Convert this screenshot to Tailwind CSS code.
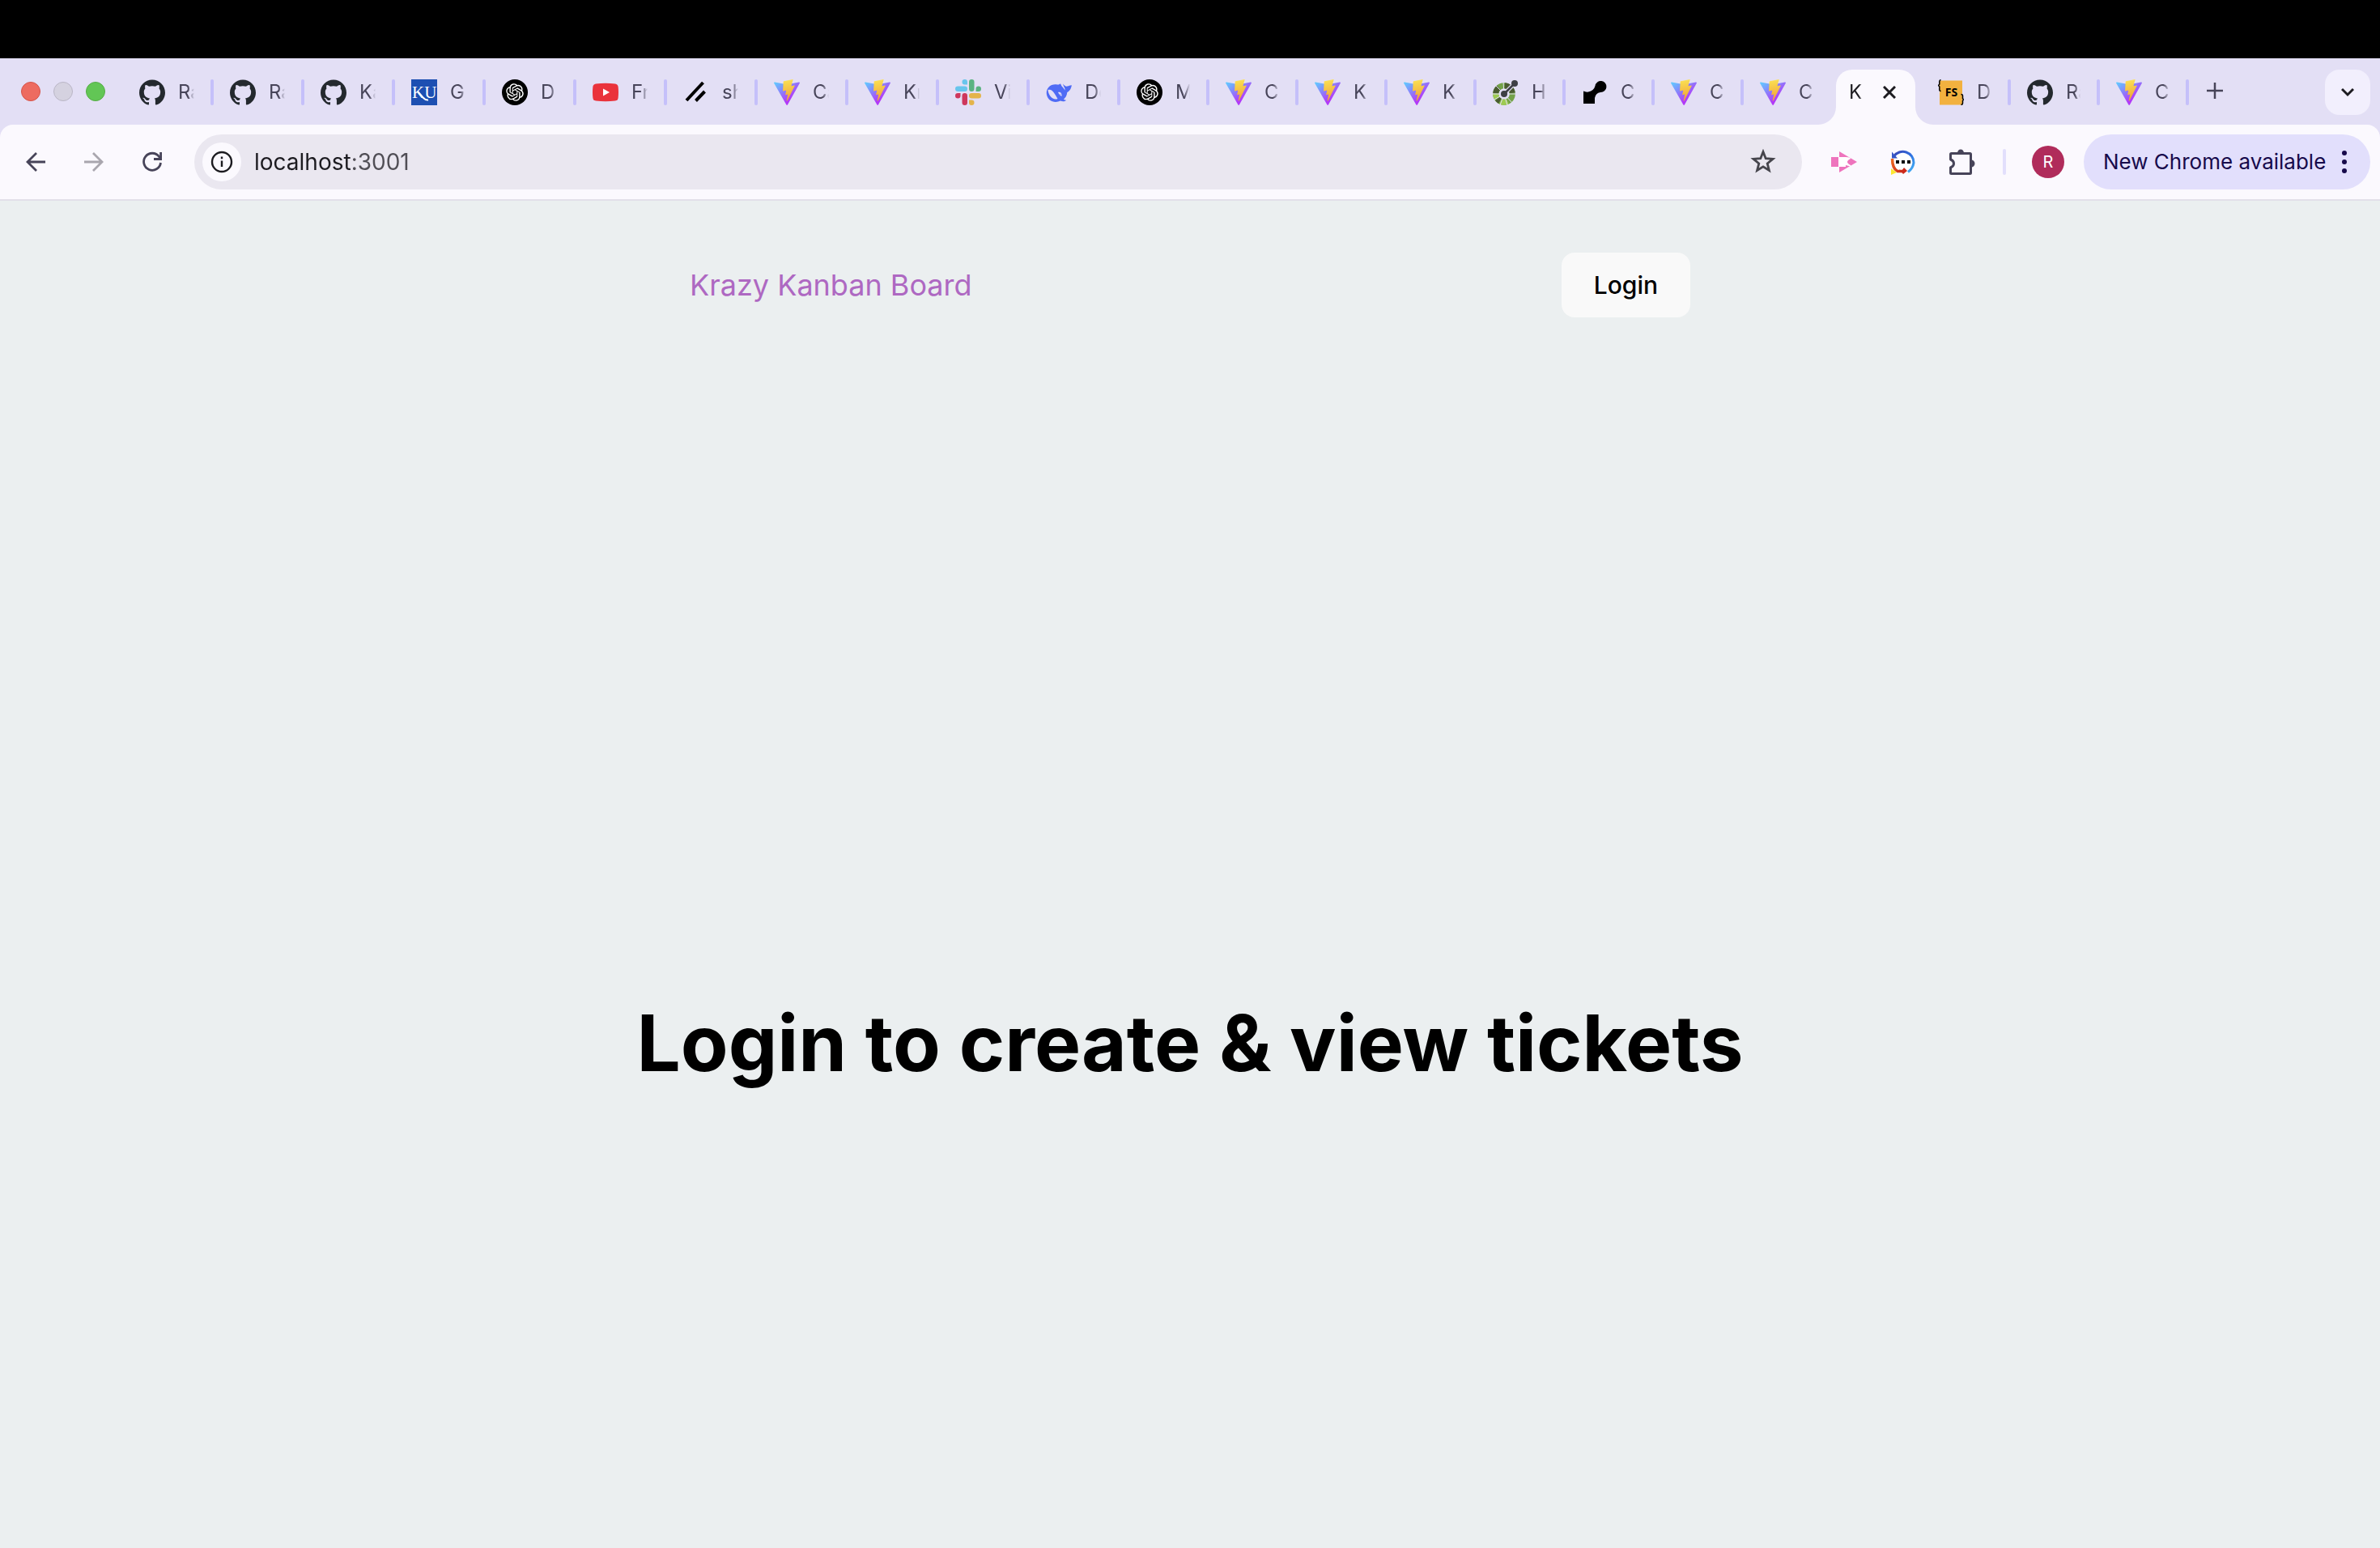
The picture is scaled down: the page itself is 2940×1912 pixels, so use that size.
<!DOCTYPE html>
<html lang="en">
<head>
<meta charset="utf-8">
<meta name="viewport" content="width=device-width, initial-scale=1">
<title>Krazy Kanban Board</title>
<script src="https://cdn.jsdelivr.net/npm/@tailwindcss/browser@4"></script>
</head>
<body class="flex min-h-screen flex-col overflow-x-hidden bg-[#ebeff0] font-['Inter','Liberation_Sans',sans-serif] text-black">

<!-- Shared icon definitions -->
<svg class="absolute size-0" aria-hidden="true">
  <defs>
    <linearGradient id="viteA" x1="-.828%" x2="57.636%" y1="7.652%" y2="78.411%"><stop offset="0%" stop-color="#62c8ff"/><stop offset="100%" stop-color="#b23af8"/></linearGradient>
    <linearGradient id="viteB" x1="43.376%" x2="50.316%" y1="2.242%" y2="89.03%"><stop offset="0%" stop-color="#fbe36a"/><stop offset="8.333%" stop-color="#f9db50"/><stop offset="100%" stop-color="#f2a63a"/></linearGradient>
    <linearGradient id="arcBlue" x1="0" x2="1" y1="0" y2="1"><stop offset="0" stop-color="#3a46b4"/><stop offset=".5" stop-color="#2f6fe0"/><stop offset="1" stop-color="#45b4f5"/></linearGradient>
    <linearGradient id="arcRed" x1="0" x2="1" y1="0" y2="1"><stop offset="0" stop-color="#ee6a1f"/><stop offset="1" stop-color="#cc2a1c"/></linearGradient>
  </defs>
  <symbol id="github" viewBox="0 0 24 24"><path fill="#24292e" d="M12 .297c-6.63 0-12 5.373-12 12 0 5.303 3.438 9.8 8.205 11.385.6.113.82-.258.82-.577 0-.285-.01-1.04-.015-2.04-3.338.724-4.042-1.61-4.042-1.61C4.422 18.07 3.633 17.7 3.633 17.7c-1.087-.744.084-.729.084-.729 1.205.084 1.838 1.236 1.838 1.236 1.07 1.835 2.809 1.305 3.495.998.108-.776.417-1.305.76-1.605-2.665-.3-5.466-1.332-5.466-5.93 0-1.31.465-2.38 1.235-3.22-.135-.303-.54-1.523.105-3.176 0 0 1.005-.322 3.3 1.23.96-.267 1.98-.399 3-.405 1.02.006 2.04.138 3 .405 2.28-1.552 3.285-1.23 3.285-1.23.645 1.653.24 2.873.12 3.176.765.84 1.23 1.91 1.23 3.22 0 4.61-2.805 5.625-5.475 5.92.42.36.81 1.096.81 2.22 0 1.606-.015 2.896-.015 3.286 0 .315.21.69.825.57C20.565 22.092 24 17.592 24 12.297c0-6.627-5.373-12-12-12"/></symbol>
  <symbol id="openai" viewBox="0 0 32 32"><circle cx="16" cy="16" r="16"/><g transform="translate(5.200 5.200) scale(.9)"><path fill="#fff" d="M22.2819 9.8211a5.9847 5.9847 0 0 0-.5157-4.9108 6.0462 6.0462 0 0 0-6.5098-2.9A6.0651 6.0651 0 0 0 4.9807 4.1818a5.9847 5.9847 0 0 0-3.9977 2.9 6.0462 6.0462 0 0 0 .7427 7.0966 5.98 5.98 0 0 0 .511 4.9107 6.051 6.051 0 0 0 6.5146 2.9001A5.9847 5.9847 0 0 0 13.2599 24a6.0557 6.0557 0 0 0 5.7718-4.2058 5.9894 5.9894 0 0 0 3.9977-2.9001 6.0557 6.0557 0 0 0-.7475-7.0729zm-9.022 12.6081a4.4755 4.4755 0 0 1-2.8764-1.0408l.1419-.0804 4.7783-2.7582a.7948.7948 0 0 0 .3927-.6813v-6.7369l2.02 1.1686a.071.071 0 0 1 .038.052v5.5826a4.504 4.504 0 0 1-4.4945 4.4944zm-9.6607-4.1254a4.4708 4.4708 0 0 1-.5346-3.0137l.142.0852 4.783 2.7582a.7712.7712 0 0 0 .7806 0l5.8428-3.3685v2.3324a.0804.0804 0 0 1-.0332.0615L9.74 19.9502a4.4992 4.4992 0 0 1-6.1408-1.6464zM2.3408 7.8956a4.485 4.485 0 0 1 2.3655-1.9728V11.6a.7664.7664 0 0 0 .3879.6765l5.8144 3.3543-2.0201 1.1685a.0757.0757 0 0 1-.071 0l-4.8303-2.7865A4.504 4.504 0 0 1 2.3408 7.872zm16.5963 3.8558L13.1038 8.364 15.1192 7.2a.0757.0757 0 0 1 .071 0l4.8303 2.7913a4.4944 4.4944 0 0 1-.6765 8.1042v-5.6772a.79.79 0 0 0-.407-.667zm2.0107-3.0231l-.142-.0852-4.7735-2.7818a.7759.7759 0 0 0-.7854 0L9.409 9.2297V6.8974a.0662.0662 0 0 1 .0284-.0615l4.8303-2.7866a4.4992 4.4992 0 0 1 6.6802 4.66zM8.3065 12.863l-2.02-1.1638a.0804.0804 0 0 1-.038-.0567V6.0742a4.4992 4.4992 0 0 1 7.3757-3.4537l-.142.0805L8.704 5.459a.7948.7948 0 0 0-.3927.6813zm1.0976-2.3654l2.602-1.4998 2.6069 1.4998v2.9994l-2.5974 1.4997-2.6067-1.4997Z"/></g></symbol>
  <symbol id="youtube" viewBox="0 0 32 32"><path fill="#ea333c" d="M4 5.500Q16 4 28 5.500 31.200 6 31.600 9 32.400 16 31.600 23 31.200 26 28 26.500 16 28 4 26.500.8 26 .4 23-.4 16 .4 9 .8 6 4 5.500Z"/><path fill="#fff" d="M13 11.500v9l8-4.500z"/></symbol>
  <symbol id="slashes" viewBox="0 0 32 32"><g fill="none" stroke="#000" stroke-width="4"><path d="M4 26 24.500 4M15.500 26.500 26.500 15"/></g></symbol>
  <symbol id="vite" viewBox="0 0 256 257"><path fill="url(#viteA)" d="M255.153 37.938L134.897 252.976c-2.483 4.44-8.862 4.466-11.382.048L.875 37.958c-2.746-4.814 1.371-10.646 6.827-9.67l120.385 21.517a6.537 6.537 0 0 0 2.322-.004l117.867-21.483c5.438-.991 9.574 4.796 6.877 9.62Z"/><path fill="url(#viteB)" d="M185.432.063L96.44 17.501a3.268 3.268 0 0 0-2.634 3.014l-5.474 92.456a3.268 3.268 0 0 0 3.997 3.378l24.777-5.718c2.318-.535 4.413 1.507 3.936 3.838l-7.361 36.047c-.495 2.426 1.782 4.5 4.151 3.78l15.304-4.649c2.372-.72 4.652 1.36 4.15 3.788l-11.698 56.621c-.732 3.542 3.979 5.473 5.943 2.437l1.313-2.028l72.516-144.72c1.215-2.423-.88-5.186-3.54-4.672l-25.505 4.922c-2.396.462-4.435-1.77-3.759-4.114l16.646-57.705c.677-2.35-1.37-4.583-3.769-4.113Z"/></symbol>
  <symbol id="slack" viewBox="0 0 32 32"><g fill="#68c5ec"><rect y="8.500" width="15" height="6.500" rx="3.250"/><path d="M15 6.500h-3.200A3.250 3.250 0 1 1 15 3.250z"/></g><g fill="#5bb381"><rect x="17" width="6.500" height="15" rx="3.250"/><path d="M25.500 15v-3.200A3.250 3.250 0 1 1 28.750 15z"/></g><g fill="#e4b44b"><rect x="17" y="17" width="15" height="6.500" rx="3.250"/><path d="M17 25.500h3.200A3.250 3.250 0 1 1 17 28.750z"/></g><g fill="#ce375c"><rect x="8.500" y="17" width="6.500" height="15" rx="3.250"/><path d="M6.500 17v3.200A3.250 3.250 0 1 1 3.250 17z"/></g></symbol>
  <symbol id="whale" viewBox="0 0 32 32"><path fill="#4f6bf5" d="M16 6.500C19 4 18 7 20 9 22 11 22.500 12 23.500 13.500 24 11 21.500 8.500 21 5.500 22.500 8 25 9 26.500 8.500 28.500 8 30 7 31.800 7.200 31.500 11 29 15 26.300 16 26 20 24 23 22 24.500 23 26 24.500 25 25 26 22 28 20 27 18 26.500 11 30 2 27 .8 18 0 10 7 5 14 6.500Z"/><path fill="#e3dff5" d="M2.500 13C8 11 11 18 14.500 24 9 26.500 3 20 2.500 13ZM15 16C18 15 20 17.500 19.500 21 17.500 20 16 18 15 16Z"/><path fill="#4f6bf5" d="M17 17.500l1.500 1-.5.800z"/></symbol>
  <symbol id="wheel" viewBox="0 0 32 32"><circle cx="14" cy="18" r="10.300" fill="none" stroke="#73a248" stroke-width="7"/><g fill="none" stroke-width="7"><circle cx="14" cy="18" r="10.300" stroke="#9ecb52" stroke-dasharray="9 55.700" stroke-dashoffset="-11.500"/><circle cx="14" cy="18" r="10.300" stroke="#4a5c31" stroke-dasharray="8 56.700" stroke-dashoffset="-33"/><circle cx="14" cy="18" r="10.300" stroke="#4a5c31" stroke-dasharray="6 58.700" stroke-dashoffset="-49"/><circle cx="14" cy="18" r="10.300" stroke="#9ecb52" stroke-dasharray="6 58.700" stroke-dashoffset="-26.500"/><circle cx="14" cy="18" r="10.300" stroke="#4a5c31" stroke-dasharray="4 60.700" stroke-dashoffset="-21.500"/><circle cx="14" cy="18" r="10.300" stroke="#4a5c31" stroke-dasharray="5 59.700" stroke-dashoffset="-58"/></g><path stroke="#e3dff5" d="M14 18 0 18M14 18 4 8M14 18 13 3M14 18 28 18M14 18 24 29M14 18 18 32M14 18 9 32M14 18 2 25"/><circle cx="14" cy="18" r="5" fill="#e3dff5"/><path stroke="#e3dff5" stroke-width="5" d="M14 18 27 5"/><path stroke="#3e4045" stroke-width="2.500" d="M14 18 27 5"/><circle cx="14" cy="18" r="4" fill="#3e4045"/><circle cx="27" cy="5" r="4" fill="#3e4045"/></symbol>
  <symbol id="node" viewBox="0 0 32 32"><path d="M2 14.500Q5 16 8 15.500 15 14 16.500 8A7 7 0 1 1 23 16Q17 17 16 23V30H2Z"/></symbol>
</svg>

<!-- Screen notch area -->
<div class="h-[72px] shrink-0 bg-black"></div>

<header class="shrink-0 bg-[#e3dff5]">
  <!-- Tab strip -->
  <div class="flex h-[82px] items-start text-2xl leading-8 text-[#474459]">
    <div class="flex h-[82px] w-[152px] shrink-0 items-center gap-4 pl-[26px]">
      <button aria-label="Close window" class="size-6 rounded-full border border-[#d65348] bg-[#ed6b60]"></button>
      <button aria-label="Minimize window" class="size-6 rounded-full border border-[#bab6c6] bg-[#d5d2e0]"></button>
      <button aria-label="Zoom window" class="size-6 rounded-full border border-[#54ad45] bg-[#62c655]"></button>
    </div>
    <nav aria-label="Tabs" class="flex items-start">
      <button class="mt-[26px] flex h-8 w-[112px] items-center gap-4 pl-5"><svg class="size-8 shrink-0"><use href="#github"/></svg><span class="w-5 shrink-0 overflow-hidden text-left [mask-image:linear-gradient(to_right,black_60%,transparent)]">Ra</span><span class="ml-1 h-8 w-1 shrink-0 rounded-sm bg-[#c5c0fa]"></span></button>
      <button class="mt-[26px] flex h-8 w-[112px] items-center gap-4 pl-5"><svg class="size-8 shrink-0"><use href="#github"/></svg><span class="w-5 shrink-0 overflow-hidden text-left [mask-image:linear-gradient(to_right,black_60%,transparent)]">Ra</span><span class="ml-1 h-8 w-1 shrink-0 rounded-sm bg-[#c5c0fa]"></span></button>
      <button class="mt-[26px] flex h-8 w-[112px] items-center gap-4 pl-5"><svg class="size-8 shrink-0"><use href="#github"/></svg><span class="w-5 shrink-0 overflow-hidden text-left [mask-image:linear-gradient(to_right,black_60%,transparent)]">Ka</span><span class="ml-1 h-8 w-1 shrink-0 rounded-sm bg-[#c5c0fa]"></span></button>
      <button class="mt-[26px] flex h-8 w-[112px] items-center gap-4 pl-5"><svg class="size-8 shrink-0" viewBox="0 0 32 32"><rect width="32" height="32" fill="#1d4fb2"/><text x="1" y="23" font-family="Liberation Serif, serif" font-size="21" fill="#fff">KU</text><path d="M8 15l7 8q3 3 6 2.500" fill="none" stroke="#fff" stroke-width="2"/></svg><span class="w-5 shrink-0 overflow-hidden text-left [mask-image:linear-gradient(to_right,black_60%,transparent)]">G</span><span class="ml-1 h-8 w-1 shrink-0 rounded-sm bg-[#c5c0fa]"></span></button>
      <button class="mt-[26px] flex h-8 w-[112px] items-center gap-4 pl-5"><svg class="size-8 shrink-0"><use href="#openai"/></svg><span class="w-5 shrink-0 overflow-hidden text-left [mask-image:linear-gradient(to_right,black_60%,transparent)]">D</span><span class="ml-1 h-8 w-1 shrink-0 rounded-sm bg-[#c5c0fa]"></span></button>
      <button class="mt-[26px] flex h-8 w-[112px] items-center gap-4 pl-5"><svg class="size-8 shrink-0"><use href="#youtube"/></svg><span class="w-5 shrink-0 overflow-hidden text-left [mask-image:linear-gradient(to_right,black_60%,transparent)]">Fr</span><span class="ml-1 h-8 w-1 shrink-0 rounded-sm bg-[#c5c0fa]"></span></button>
      <button class="mt-[26px] flex h-8 w-[112px] items-center gap-4 pl-5"><svg class="size-8 shrink-0"><use href="#slashes"/></svg><span class="w-5 shrink-0 overflow-hidden text-left [mask-image:linear-gradient(to_right,black_60%,transparent)]">sh</span><span class="ml-1 h-8 w-1 shrink-0 rounded-sm bg-[#c5c0fa]"></span></button>
      <button class="mt-[26px] flex h-8 w-[112px] items-center gap-4 pl-5"><svg class="size-8 shrink-0"><use href="#vite"/></svg><span class="w-5 shrink-0 overflow-hidden text-left [mask-image:linear-gradient(to_right,black_60%,transparent)]">Ca</span><span class="ml-1 h-8 w-1 shrink-0 rounded-sm bg-[#c5c0fa]"></span></button>
      <button class="mt-[26px] flex h-8 w-[112px] items-center gap-4 pl-5"><svg class="size-8 shrink-0"><use href="#vite"/></svg><span class="w-5 shrink-0 overflow-hidden text-left [mask-image:linear-gradient(to_right,black_60%,transparent)]">Kr</span><span class="ml-1 h-8 w-1 shrink-0 rounded-sm bg-[#c5c0fa]"></span></button>
      <button class="mt-[26px] flex h-8 w-[112px] items-center gap-4 pl-5"><svg class="size-8 shrink-0"><use href="#slack"/></svg><span class="w-5 shrink-0 overflow-hidden text-left [mask-image:linear-gradient(to_right,black_60%,transparent)]">Vi</span><span class="ml-1 h-8 w-1 shrink-0 rounded-sm bg-[#c5c0fa]"></span></button>
      <button class="mt-[26px] flex h-8 w-[112px] items-center gap-4 pl-5"><svg class="size-8 shrink-0"><use href="#whale"/></svg><span class="w-5 shrink-0 overflow-hidden text-left [mask-image:linear-gradient(to_right,black_60%,transparent)]">De</span><span class="ml-1 h-8 w-1 shrink-0 rounded-sm bg-[#c5c0fa]"></span></button>
      <button class="mt-[26px] flex h-8 w-[110px] items-center gap-4 pl-5"><svg class="size-8 shrink-0"><use href="#openai"/></svg><span class="w-[18px] shrink-0 overflow-hidden text-left [mask-image:linear-gradient(to_right,black_60%,transparent)]">M</span><span class="ml-1 h-8 w-1 shrink-0 rounded-sm bg-[#c5c0fa]"></span></button>
      <button class="mt-[26px] flex h-8 w-[110px] items-center gap-4 pl-5"><svg class="size-8 shrink-0"><use href="#vite"/></svg><span class="w-[18px] shrink-0 overflow-hidden text-left [mask-image:linear-gradient(to_right,black_60%,transparent)]">C</span><span class="ml-1 h-8 w-1 shrink-0 rounded-sm bg-[#c5c0fa]"></span></button>
      <button class="mt-[26px] flex h-8 w-[110px] items-center gap-4 pl-5"><svg class="size-8 shrink-0"><use href="#vite"/></svg><span class="w-[18px] shrink-0 overflow-hidden text-left [mask-image:linear-gradient(to_right,black_60%,transparent)]">K</span><span class="ml-1 h-8 w-1 shrink-0 rounded-sm bg-[#c5c0fa]"></span></button>
      <button class="mt-[26px] flex h-8 w-[110px] items-center gap-4 pl-5"><svg class="size-8 shrink-0"><use href="#vite"/></svg><span class="w-[18px] shrink-0 overflow-hidden text-left [mask-image:linear-gradient(to_right,black_60%,transparent)]">K</span><span class="ml-1 h-8 w-1 shrink-0 rounded-sm bg-[#c5c0fa]"></span></button>
      <button class="mt-[26px] flex h-8 w-[110px] items-center gap-4 pl-5"><svg class="size-8 shrink-0"><use href="#wheel"/></svg><span class="w-[18px] shrink-0 overflow-hidden text-left [mask-image:linear-gradient(to_right,black_60%,transparent)]">H</span><span class="ml-1 h-8 w-1 shrink-0 rounded-sm bg-[#c5c0fa]"></span></button>
      <button class="mt-[26px] flex h-8 w-[110px] items-center gap-4 pl-5"><svg class="size-8 shrink-0"><use href="#node"/></svg><span class="w-[18px] shrink-0 overflow-hidden text-left [mask-image:linear-gradient(to_right,black_60%,transparent)]">C</span><span class="ml-1 h-8 w-1 shrink-0 rounded-sm bg-[#c5c0fa]"></span></button>
      <button class="mt-[26px] flex h-8 w-[110px] items-center gap-4 pl-5"><svg class="size-8 shrink-0"><use href="#vite"/></svg><span class="w-[18px] shrink-0 overflow-hidden text-left [mask-image:linear-gradient(to_right,black_60%,transparent)]">C</span><span class="ml-1 h-8 w-1 shrink-0 rounded-sm bg-[#c5c0fa]"></span></button>
      <button class="mt-[26px] flex h-8 w-[92px] items-center gap-4 pl-5"><svg class="size-8 shrink-0"><use href="#vite"/></svg><span class="w-[18px] shrink-0 overflow-hidden text-left [mask-image:linear-gradient(to_right,black_60%,transparent)]">C</span></button>
      <!-- Active tab with flared feet -->
      <div class="mt-[14px] flex h-[68px] w-[142px] items-end">
        <svg class="size-[22px] shrink-0 text-[#fbf9fe]" viewBox="0 0 22 22"><path fill="currentColor" d="M22 0V22H0A22 22 0 0 0 22 0Z"/></svg>
        <div class="flex h-[68px] w-[98px] shrink-0 items-start rounded-t-[20px] bg-[#fbf9fe] pt-3 pl-4 text-[#1c1b20]">
          <span class="w-5 shrink-0 overflow-hidden [mask-image:linear-gradient(to_right,black_60%,transparent)]">K</span>
          <button aria-label="Close tab" class="ml-3.5 flex size-8 items-center justify-center"><svg class="size-4" viewBox="0 0 16 16" fill="none" stroke="currentColor" stroke-width="3"><path d="M1 1l14 14M15 1L1 15"/></svg></button>
        </div>
        <svg class="size-[22px] shrink-0 text-[#fbf9fe]" viewBox="0 0 22 22"><path fill="currentColor" d="M0 0V22H22A22 22 0 0 1 0 0Z"/></svg>
      </div>
      <button class="mt-[26px] -ml-3.5 flex h-8 w-[110px] items-center gap-4 pl-5"><svg class="size-8 shrink-0" viewBox="0 0 32 32"><rect x="2" y="1.500" width="28" height="30" fill="#f2b13f"/><text x="16.500" y="21" text-anchor="middle" font-family="Open Sans, sans-serif" font-weight="700" font-size="14">FS</text><path fill="none" stroke="#000" stroke-width="1.500" d="M3.500.8Q1.800.8 1.800 3V6L.5 7.500 1.800 9V12.500Q1.800 14.500 3.500 14.500M28.500 18.500Q30.500 18.500 30.500 20.500V23.500L31.500 25 30.500 26.500V29.500Q30.500 31.300 28.500 31.300"/></svg><span class="w-[18px] shrink-0 overflow-hidden text-left [mask-image:linear-gradient(to_right,black_60%,transparent)]">D</span><span class="ml-1 h-8 w-1 shrink-0 rounded-sm bg-[#c5c0fa]"></span></button>
      <button class="mt-[26px] flex h-8 w-[110px] items-center gap-4 pl-5"><svg class="size-8 shrink-0"><use href="#github"/></svg><span class="w-[18px] shrink-0 overflow-hidden text-left [mask-image:linear-gradient(to_right,black_60%,transparent)]">Ra</span><span class="ml-1 h-8 w-1 shrink-0 rounded-sm bg-[#c5c0fa]"></span></button>
      <button class="mt-[26px] flex h-8 w-[110px] items-center gap-4 pl-5"><svg class="size-8 shrink-0"><use href="#vite"/></svg><span class="w-[18px] shrink-0 overflow-hidden text-left [mask-image:linear-gradient(to_right,black_60%,transparent)]">C</span><span class="ml-1 h-8 w-1 shrink-0 rounded-sm bg-[#c5c0fa]"></span></button>
    </nav>
    <button aria-label="New tab" class="mt-6 ml-4 flex size-8 shrink-0 items-center justify-center"><svg class="size-5" viewBox="0 0 20 20" stroke="currentColor" stroke-width="2.500"><path d="M10 0v20M0 10h20"/></svg></button>
    <button aria-label="Search tabs" class="mt-[14px] mr-3 ml-auto flex size-14 shrink-0 items-center justify-center rounded-[18px] bg-[#f2effd] text-[#1c1b20]"><svg class="size-4" viewBox="0 0 16 16" fill="none" stroke="currentColor" stroke-width="3"><path d="M1 4l7 7 7-7"/></svg></button>
  </div>

  <!-- Toolbar -->
  <div class="flex h-[94px] items-center rounded-t-2xl border-b-2 border-[#e2dfe9] bg-[#fbf9fe] pr-3 pl-7 text-[#474459]">
    <div class="flex shrink-0 items-center gap-10">
      <button aria-label="Back" class="size-8"><svg class="size-8" viewBox="0 0 32 32" fill="none" stroke="currentColor" stroke-width="2.800"><path d="M28 16H6M17 5L6 16l11 11"/></svg></button>
      <button aria-label="Forward" disabled class="size-8 text-[#a9a6ae]"><svg class="size-8" viewBox="0 0 32 32" fill="none" stroke="currentColor" stroke-width="2.800"><path d="M4 16h22M15 5l11 11-11 11"/></svg></button>
      <button aria-label="Reload" class="size-8"><svg class="size-8" viewBox="0 0 32 32" fill="none" stroke="currentColor" stroke-width="2.800"><path d="M26.500 17A10.500 10.500 0 1 1 24.500 9.500L26 11.500"/><path d="M26.600 4v8.500H18"/></svg></button>
    </div>
    <div class="ml-9 flex h-[68px] flex-1 items-center rounded-full bg-[#eae7f0] pr-8 pl-2.5">
      <button aria-label="View site information" class="flex size-12 shrink-0 items-center justify-center rounded-full bg-[#fbf9fe] text-[#1c1b20]"><svg class="size-7" viewBox="0 0 28 28" fill="none" stroke="currentColor" stroke-width="2.400"><circle cx="14" cy="14" r="12"/><path d="M14 12.500V20M14 7.500v2.700"/></svg></button>
      <input aria-label="Address" value="localhost:3001" class="ml-4 h-9 min-w-0 flex-1 bg-[linear-gradient(to_right,#1c1b20_120px,#504e55_120px)] bg-clip-text text-[28px] leading-9 text-transparent outline-none">
      <button aria-label="Bookmark this tab" class="size-8 text-[#46454c]"><svg class="size-8" viewBox="0 0 32 32" fill="none" stroke="currentColor" stroke-width="2.800"><path d="M16 3.500l3.200 8.200 8.800.6-6.800 5.600 2.200 8.600-7.400-4.700-7.400 4.700 2.200-8.600L4 12.300l8.800-.6z"/></svg></button>
    </div>
    <div class="ml-9 flex shrink-0 items-center gap-[41px]">
      <button aria-label="Screen recorder extension" class="size-8"><svg class="size-8" viewBox="0 0 32 32"><path fill="#ee74bd" d="M0 10h9v12H0zM10 3l22 13-22 13z"/><path fill="#fff" d="M9 10h9q6 0 6 2-4 2-4 4t4 4v1.500l-6-1.500v2H9z"/></svg></button>
      <button aria-label="Chat extension" class="size-8"><svg class="size-8" viewBox="0 0 32 32"><circle cx="16" cy="16" r="13" fill="#fff"/><path fill="none" stroke="url(#arcBlue)" stroke-width="3" d="M4.500 9A13.500 13.500 0 0 1 29 17Q28 24 22 28.500"/><path fill="#3656c6" d="M2 3.500v8h7z"/><path fill="none" stroke="url(#arcRed)" stroke-width="3.500" d="M2.500 12Q2.500 24 9 27.500H16"/><path fill="#cc2a1c" d="M11 25l3 2 3-4 4 4-5 4z"/><path fill="#fde733" d="M1 24l7 5-7 3z"/><path d="M7 14h4v4H7zM14 14h4v4h-4zM21 14h4v4h-4z"/></svg></button>
      <button aria-label="Extensions" class="size-8"><svg class="size-8" viewBox="0 0 32 32"><path fill="none" stroke="currentColor" stroke-width="3" stroke-linejoin="round" d="M1.500 6.500q0-1 1-1h23q1 0 1 1v23q0 1-1 1h-23q-1 0-1-1v-6.500q4-1.500 4-5t-4-5z"/><path fill="currentColor" d="M10 5a4 4.500 0 0 1 8 0zM27 13.500a4.500 4.500 0 0 1 0 9z"/></svg></button>
    </div>
    <span class="ml-[34px] h-8 w-1 shrink-0 rounded-sm bg-[#e2dffc]"></span>
    <button aria-label="Profile" class="ml-8 size-10 shrink-0 rounded-full bg-[#b02c5b] text-xl text-white">R</button>
    <button class="ml-6 flex h-[68px] shrink-0 items-center rounded-full bg-[#e2dffc] pr-7 pl-6 text-[26px] leading-8 text-[#170a4b]">
      <span class="w-[270px] text-left whitespace-nowrap">New Chrome available</span>
      <svg class="ml-6 h-7 w-2" viewBox="0 0 8 28" fill="currentColor"><circle cx="4" cy="3" r="3"/><circle cx="4" cy="14" r="3"/><circle cx="4" cy="25" r="3"/></svg>
    </button>
  </div>
</header>

<!-- Application page -->
<main class="flex-1 pt-16">
  <div class="mx-auto flex w-full max-w-[1236px] items-center justify-between">
    <a href="/" class="text-4xl leading-[48px] text-[#ae68c2]">Krazy Kanban Board</a>
    <button class="rounded-2xl bg-[#f9f9f9] px-10 py-5 text-3xl leading-10 font-medium">Login</button>
  </div>
  <h1 class="mt-[840px] text-center text-8xl leading-[112px] font-bold">Login to create &amp; view tickets</h1>
</main>
</body>
</html>
